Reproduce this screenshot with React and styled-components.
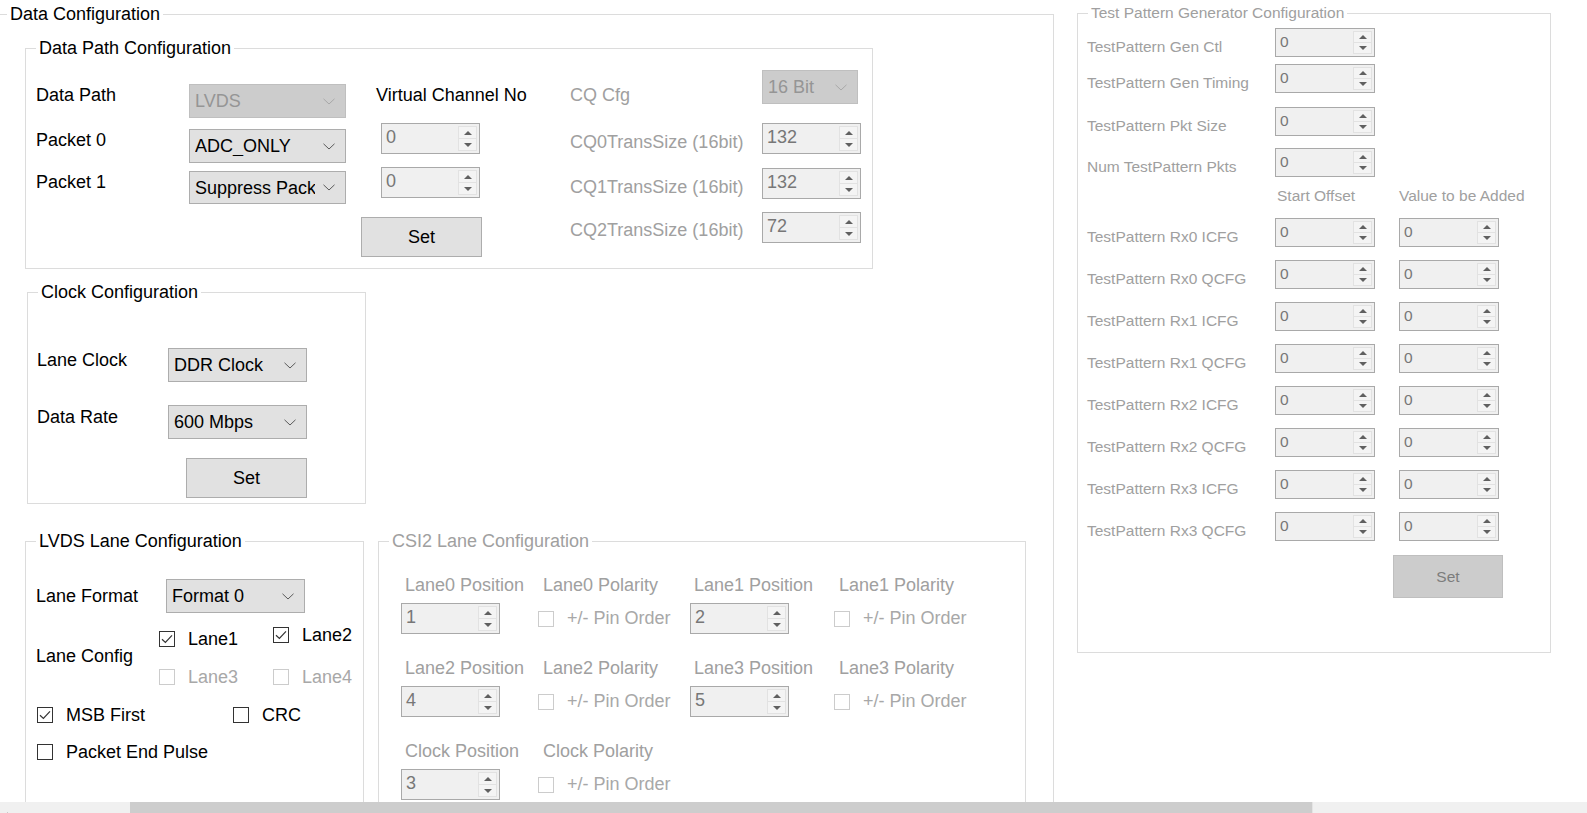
import React from "react";
import styled, { createGlobalStyle, css } from "styled-components";

const GlobalStyle = createGlobalStyle`
  html, body {
    margin: 0;
    padding: 0;
    background: #fff;
  }
  body {
    font-family: "Liberation Sans", Arial, sans-serif;
    font-size: 18px;
    color: #000;
    overflow: hidden;
  }
`;

const offset = css`
  margin-top: ${(p) => p.$mt || 0}px;
  margin-left: ${(p) => p.$ml || 0}px;
`;

const GRAY_TEXT = "#a0a0a0";

const Screen = styled.div`
  width: 1587px;
  height: 813px;
  display: flex;
  flex-direction: column;
  overflow: hidden;
  background: #fff;
`;

const Workspace = styled.div`
  flex: 1;
  min-height: 0;
  display: flex;
  align-items: flex-start;
  gap: 23px;
  padding-top: 3px;
  overflow: hidden;
`;

const Group = styled.fieldset`
  box-sizing: border-box;
  flex-shrink: 0;
  min-width: 0;
  padding: 0;
  border: 1px solid #dcdcdc;
  width: ${(p) => p.$w}px;
  height: ${(p) => p.$h}px;
  margin: 0;
  ${offset};
`;

const Legend = styled.legend`
  margin-left: 10px;
  padding: 0 3px;
  font-size: ${(p) => (p.$small ? 15.5 : 18)}px;
  line-height: ${(p) => (p.$small ? 20 : 22)}px;
  color: ${(p) => (p.$off ? GRAY_TEXT : "#000")};
  white-space: nowrap;
`;

const Stack = styled.div`
  display: flex;
  flex-direction: column;
  align-items: flex-start;
  padding-left: ${(p) => p.$pl || 0}px;
  padding-top: ${(p) => p.$pt || 0}px;
`;

const Columns = styled.div`
  display: flex;
  align-items: flex-start;
  padding-left: ${(p) => p.$pl || 0}px;
  padding-top: ${(p) => p.$pt || 0}px;
`;

const Col = styled.div`
  display: flex;
  flex-direction: column;
  align-items: flex-start;
  flex-shrink: 0;
  width: ${(p) => p.$w}px;
  ${offset};
`;

const Caption = styled.span`
  display: block;
  line-height: 20px;
  white-space: nowrap;
  font-size: ${(p) => p.$size || 18}px;
  color: ${(p) => (p.$off ? GRAY_TEXT : "#000")};
  ${offset};
`;

const FieldRow = styled.div`
  display: flex;
  align-items: center;
  ${offset};
`;

const FieldLabel = styled.span`
  flex-shrink: 0;
  width: ${(p) => p.$w}px;
  line-height: 20px;
  white-space: nowrap;
`;

/* combo box */
const ComboBox = styled.div`
  box-sizing: border-box;
  display: flex;
  align-items: center;
  flex-shrink: 0;
  width: ${(p) => p.$w}px;
  height: ${(p) => p.$h}px;
  padding-left: 5px;
  border: 1px solid ${(p) => (p.$off ? "#bfbfbf" : "#adadad")};
  background: ${(p) => (p.$off ? "#cccccc" : "#e1e1e1")};
  color: ${(p) => (p.$off ? "#959595" : "#000")};
  ${offset};
`;

const ComboText = styled.span`
  flex: 1;
  min-width: 0;
  overflow: hidden;
  white-space: nowrap;
  line-height: 20px;
`;

const ComboArrow = styled.span`
  width: 28px;
  flex-shrink: 0;
  display: flex;
  align-items: center;
  justify-content: center;
  padding-right: 2px;
`;

const Combo = ({ value, off, w, h, mt, ml }) => (
  <ComboBox $off={off} $w={w} $h={h} $mt={mt} $ml={ml}>
    <ComboText>{value}</ComboText>
    <ComboArrow>
      <svg width="12" height="7" viewBox="0 0 12 7">
        <path
          d="M0.5 0.8 L6 6 L11.5 0.8"
          fill="none"
          stroke={off ? "#a8a8a8" : "#5a5a5a"}
          strokeWidth="1"
        />
      </svg>
    </ComboArrow>
  </ComboBox>
);

/* numeric up-down */
const SpinBox = styled.div`
  box-sizing: border-box;
  display: flex;
  flex-shrink: 0;
  width: ${(p) => p.$w}px;
  height: ${(p) => p.$h}px;
  border: 1px solid #a9a9a9;
  background: #f0f0f0;
  ${offset};
`;

const SpinValue = styled.span`
  flex: 1;
  padding: 1px 0 0 4px;
  font-size: ${(p) => p.$size || 18}px;
  line-height: ${(p) => p.$lh}px;
  color: #777;
`;

const SpinButtons = styled.div`
  width: 17px;
  margin: 2px 2px 2px 0;
  display: flex;
  flex-direction: column;
  border: 1px solid #e2e2e2;
  background: #f4f4f4;
`;

const SpinHalf = styled.div`
  flex: 1;
  display: flex;
  align-items: center;
  justify-content: center;
  & + & {
    border-top: 1px solid #e2e2e2;
  }
`;

const Tri = styled.span`
  width: 0;
  height: 0;
  border-left: 4px solid transparent;
  border-right: 4px solid transparent;
  ${(p) =>
    p.$up
      ? "border-bottom: 4px solid #606060;"
      : "border-top: 4px solid #606060;"}
`;

const Spin = ({ value, w = 99, h = 31, size, mt, ml }) => (
  <SpinBox $w={w} $h={h} $mt={mt} $ml={ml}>
    <SpinValue $size={size} $lh={h - 6}>
      {value}
    </SpinValue>
    <SpinButtons>
      <SpinHalf>
        <Tri $up />
      </SpinHalf>
      <SpinHalf>
        <Tri />
      </SpinHalf>
    </SpinButtons>
  </SpinBox>
);

const PushButton = styled.button`
  box-sizing: border-box;
  flex-shrink: 0;
  width: ${(p) => p.$w}px;
  height: ${(p) => p.$h}px;
  padding: 0;
  font-family: inherit;
  font-size: ${(p) => p.$size || 18}px;
  border: 1px solid ${(p) => (p.$off ? "#bfbfbf" : "#adadad")};
  background: ${(p) => (p.$off ? "#cccccc" : "#e1e1e1")};
  color: ${(p) => (p.$off ? "#7c7c7c" : "#000")};
  ${offset};
`;

/* check box */
const CheckItem = styled.label`
  display: flex;
  align-items: center;
  gap: 13px;
  height: 20px;
  flex-shrink: 0;
  white-space: nowrap;
  width: ${(p) => (p.$w ? `${p.$w}px` : "auto")};
  color: ${(p) => (p.$off ? "#a8a8a8" : "#000")};
  ${offset};
`;

const CheckSquare = styled.span`
  box-sizing: border-box;
  width: 16px;
  height: 16px;
  flex-shrink: 0;
  display: flex;
  align-items: center;
  justify-content: center;
  background: #fff;
  border: 1px solid ${(p) => (p.$off ? "#cccccc" : "#333333")};
`;

const Check = ({ label, checked, off, w, mt, ml }) => (
  <CheckItem $off={off} $w={w} $mt={mt} $ml={ml}>
    <CheckSquare $off={off}>
      {checked && (
        <svg width="14" height="14" viewBox="0 0 14 14">
          <path
            d="M2 7.2 L5.4 10.4 L12 3.4"
            fill="none"
            stroke="#333"
            strokeWidth="1.2"
          />
        </svg>
      )}
    </CheckSquare>
    {label}
  </CheckItem>
);

const CheckGrid = styled.div`
  display: grid;
  grid-template-columns: 114px 114px;
  row-gap: 18px;
  align-items: start;
`;

/* CSI2 */
const CsiGrid = styled.div`
  display: grid;
  grid-template-columns: 137px 152px 144px 150px;
  row-gap: 24px;
  padding: 23px 0 0 22px;
`;

const CsiCell = styled.div`
  display: flex;
  flex-direction: column;
  align-items: flex-start;
  gap: 8px;
`;

const CheckSlot = styled.div`
  height: 31px;
  display: flex;
  align-items: center;
`;

/* Test pattern */
const TpRow = styled.div`
  display: flex;
  align-items: flex-end;
  ${offset};
`;

const TpLabel = styled.span`
  width: 188px;
  flex-shrink: 0;
  font-size: 15.5px;
  line-height: 20px;
  color: ${GRAY_TEXT};
  white-space: nowrap;
`;

const TpHead = styled.span`
  width: ${(p) => p.$w}px;
  flex-shrink: 0;
  font-size: 15.5px;
  line-height: 20px;
  color: ${GRAY_TEXT};
  white-space: nowrap;
  margin-left: ${(p) => p.$ml || 0}px;
`;

/* scroll bar */
const HScroll = styled.div`
  height: 11px;
  flex-shrink: 0;
  display: flex;
  background: #f0f0f0;
  overflow: hidden;
`;

const ScrollLead = styled.div`
  width: 130px;
  flex-shrink: 0;
`;

const ScrollThumb = styled.div`
  width: 1182px;
  flex-shrink: 0;
  background: #cdcdcd;
  border-right: 1px solid #e4e4e4;
`;

const csiRows = [
  [
    { pos: "Lane0 Position", val: "1", pol: "Lane0 Polarity" },
    { pos: "Lane1 Position", val: "2", pol: "Lane1 Polarity" },
  ],
  [
    { pos: "Lane2 Position", val: "4", pol: "Lane2 Polarity" },
    { pos: "Lane3 Position", val: "5", pol: "Lane3 Polarity" },
  ],
  [{ pos: "Clock Position", val: "3", pol: "Clock Polarity" }],
];

const rxRows = [
  "TestPattern Rx0 ICFG",
  "TestPattern Rx0 QCFG",
  "TestPattern Rx1 ICFG",
  "TestPattern Rx1 QCFG",
  "TestPattern Rx2 ICFG",
  "TestPattern Rx2 QCFG",
  "TestPattern Rx3 ICFG",
  "TestPattern Rx3 QCFG",
];

function DataPathGroup() {
  return (
    <Group $w={848} $h={232}>
      <Legend>Data Path Configuration</Legend>
      <Columns $pl={10} $pt={11}>
        <Col $w={153}>
          <Caption $mt={15}>Data Path</Caption>
          <Caption $mt={25}>Packet 0</Caption>
          <Caption $mt={22}>Packet 1</Caption>
        </Col>
        <Col $w={157}>
          <Combo value="LVDS" off w={157} h={34} mt={14} />
          <Combo value="ADC_ONLY" w={157} h={34} mt={11} />
          <Combo value="Suppress Packet" w={157} h={33} mt={8} />
        </Col>
        <Col $w={121} $ml={15}>
          <Caption $mt={15} $ml={15}>Virtual Channel No</Caption>
          <Spin value="0" mt={18} ml={20} />
          <Spin value="0" mt={13} ml={20} />
          <PushButton $w={121} $h={40} $mt={19}>
            Set
          </PushButton>
        </Col>
        <Col $w={192} $ml={88}>
          <Caption $off $mt={15}>CQ Cfg</Caption>
          <Caption $off $mt={27}>CQ0TransSize (16bit)</Caption>
          <Caption $off $mt={25}>CQ1TransSize (16bit)</Caption>
          <Caption $off $mt={23}>CQ2TransSize (16bit)</Caption>
        </Col>
        <Col $w={100}>
          <Combo value="16 Bit" off w={96} h={34} />
          <Spin value="132" mt={19} />
          <Spin value="132" mt={14} />
          <Spin value="72" mt={13} />
        </Col>
      </Columns>
    </Group>
  );
}

function ClockGroup() {
  return (
    <Group $w={339} $h={223} $mt={12} $ml={2}>
      <Legend>Clock Configuration</Legend>
      <Columns $pl={9} $pt={45}>
        <Col $w={131}>
          <Caption $mt={2}>Lane Clock</Caption>
          <Caption $mt={37}>Data Rate</Caption>
        </Col>
        <Col $w={139}>
          <Combo value="DDR Clock" w={139} h={34} />
          <Combo value="600 Mbps" w={139} h={34} mt={23} />
          <PushButton $w={121} $h={40} $mt={19} $ml={18}>
            Set
          </PushButton>
        </Col>
      </Columns>
    </Group>
  );
}

function LvdsGroup() {
  return (
    <Group $w={339} $h={330}>
      <Legend>LVDS Lane Configuration</Legend>
      <Stack $pl={10} $pt={27}>
        <FieldRow>
          <FieldLabel $w={130}>Lane Format</FieldLabel>
          <Combo value="Format 0" w={139} h={34} />
        </FieldRow>
        <FieldRow $mt={12}>
          <FieldLabel $w={123}>Lane Config</FieldLabel>
          <CheckGrid>
            <Check label="Lane1" checked mt={4} />
            <Check label="Lane2" checked />
            <Check label="Lane3" off />
            <Check label="Lane4" off />
          </CheckGrid>
        </FieldRow>
        <FieldRow $mt={18}>
          <Check label="MSB First" checked w={196} ml={1} />
          <Check label="CRC" />
        </FieldRow>
        <FieldRow $mt={17}>
          <Check label="Packet End Pulse" ml={1} />
        </FieldRow>
      </Stack>
    </Group>
  );
}

function Csi2Group() {
  return (
    <Group $w={648} $h={330}>
      <Legend $off>CSI2 Lane Configuration</Legend>
      <CsiGrid>
        {csiRows.map((row) =>
          row.map((lane) => (
            <React.Fragment key={lane.pos}>
              <CsiCell>
                <Caption $off $ml={4}>{lane.pos}</Caption>
                <Spin value={lane.val} />
              </CsiCell>
              <CsiCell>
                <Caption $off $ml={5}>{lane.pol}</Caption>
                <CheckSlot>
                  <Check label="+/- Pin Order" off />
                </CheckSlot>
              </CsiCell>
            </React.Fragment>
          ))
        )}
      </CsiGrid>
    </Group>
  );
}

function TestPatternGroup() {
  return (
    <Group $w={474} $h={650}>
      <Legend $off $small>
        Test Pattern Generator Configuration
      </Legend>
      <Stack $pl={9}>
        <TpRow $mt={5}>
          <TpLabel>TestPattern Gen Ctl</TpLabel>
          <Spin value="0" w={100} h={29} size={15.5} />
        </TpRow>
        <TpRow $mt={7}>
          <TpLabel>TestPattern Gen Timing</TpLabel>
          <Spin value="0" w={100} h={29} size={15.5} />
        </TpRow>
        <TpRow $mt={14}>
          <TpLabel>TestPattern Pkt Size</TpLabel>
          <Spin value="0" w={100} h={29} size={15.5} />
        </TpRow>
        <TpRow $mt={12}>
          <TpLabel>Num TestPattern Pkts</TpLabel>
          <Spin value="0" w={100} h={29} size={15.5} />
        </TpRow>
        <TpRow $mt={9}>
          <TpHead $w={190} />
          <TpHead $w={122}>Start Offset</TpHead>
          <TpHead $w={120}>Value to be Added</TpHead>
        </TpRow>
        {rxRows.map((name, i) => (
          <TpRow key={name} $mt={i === 0 ? 12 : 13}>
            <TpLabel>{name}</TpLabel>
            <Spin value="0" w={100} h={29} size={15.5} />
            <Spin value="0" w={100} h={29} size={15.5} ml={24} />
          </TpRow>
        ))}
        <PushButton $off $w={110} $h={43} $mt={14} $ml={306} $size={15.5}>
          Set
        </PushButton>
      </Stack>
    </Group>
  );
}

export default function App() {
  return (
    <>
      <GlobalStyle />
      <Screen>
        <Workspace>
          <Group $w={1058} $h={900} $ml={-4}>
            <Legend>Data Configuration</Legend>
            <Stack $pl={28} $pt={12}>
              <DataPathGroup />
              <ClockGroup />
              <FieldRow $mt={26} style={undefined}>
                <LvdsGroup />
                <Col $w={14} />
                <Csi2Group />
              </FieldRow>
            </Stack>
          </Group>
          <TestPatternGroup />
        </Workspace>
        <HScroll>
          <ScrollLead>
            <svg width="10" height="11" viewBox="0 0 10 11">
              <path d="M8 6 L3 11" fill="none" stroke="#555" strokeWidth="1.4" />
            </svg>
          </ScrollLead>
          <ScrollThumb />
        </HScroll>
      </Screen>
    </>
  );
}
